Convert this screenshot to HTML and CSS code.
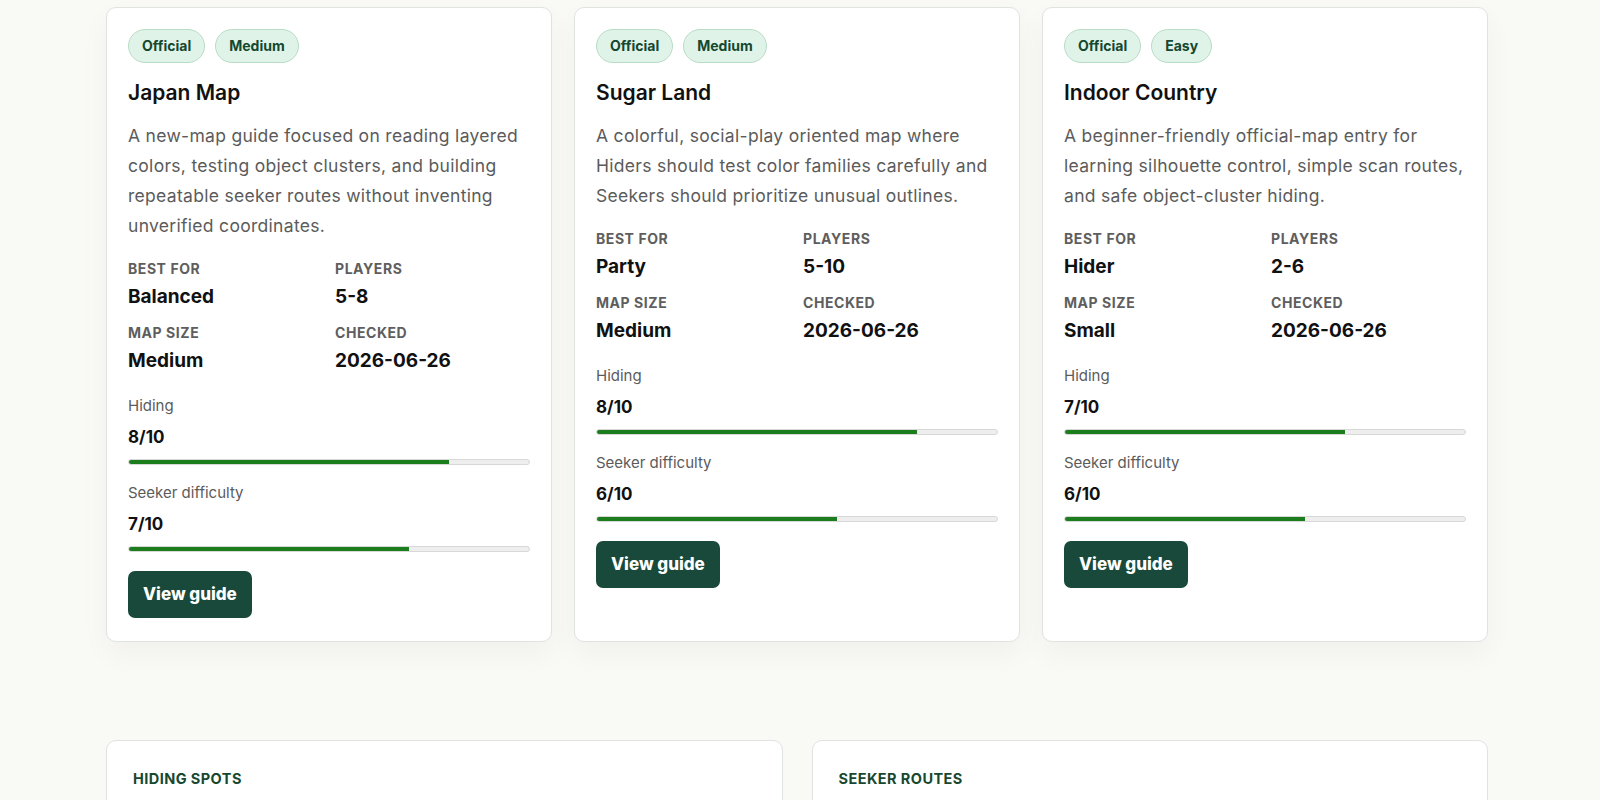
FILE: index.html
```html
<!DOCTYPE html>

<html>
    <head>
        <meta charset=UTF-8>
        <title>Hide and Seek map guides</title>

        <link rel="stylesheet" href="styles.css">
    </head>

    <body>
        <div id="page">
            <div class="cards">
                <div class="card">
                    <div class="tags">
                        <span class="tag">Official</span>
                        <span class="tag">Medium</span>
                    </div>
                    <h3>Japan Map</h3>
                    <p class="desc">A new-map guide focused on reading layered colors, testing object clusters, and building repeatable seeker routes without inventing unverified coordinates.</p>
                    <dl class="facts">
                        <div><dt>Best for</dt><dd>Balanced</dd></div>
                        <div><dt>Players</dt><dd>5-8</dd></div>
                        <div><dt>Map size</dt><dd>Medium</dd></div>
                        <div><dt>Checked</dt><dd>2026-06-26</dd></div>
                    </dl>
                    <div class="meter">
                        <span class="meter-label">Hiding</span>
                        <strong>8/10</strong>
                        <div class="bar"><div class="fill" style="width: 80%"></div></div>
                    </div>
                    <div class="meter">
                        <span class="meter-label">Seeker difficulty</span>
                        <strong>7/10</strong>
                        <div class="bar"><div class="fill" style="width: 70%"></div></div>
                    </div>
                    <a class="btn" href="#">View guide</a>
                </div>

                <div class="card">
                    <div class="tags">
                        <span class="tag">Official</span>
                        <span class="tag">Medium</span>
                    </div>
                    <h3>Sugar Land</h3>
                    <p class="desc">A colorful, social-play oriented map where Hiders should test color families carefully and Seekers should prioritize unusual outlines.</p>
                    <dl class="facts">
                        <div><dt>Best for</dt><dd>Party</dd></div>
                        <div><dt>Players</dt><dd>5-10</dd></div>
                        <div><dt>Map size</dt><dd>Medium</dd></div>
                        <div><dt>Checked</dt><dd>2026-06-26</dd></div>
                    </dl>
                    <div class="meter">
                        <span class="meter-label">Hiding</span>
                        <strong>8/10</strong>
                        <div class="bar"><div class="fill" style="width: 80%"></div></div>
                    </div>
                    <div class="meter">
                        <span class="meter-label">Seeker difficulty</span>
                        <strong>6/10</strong>
                        <div class="bar"><div class="fill" style="width: 60%"></div></div>
                    </div>
                    <a class="btn" href="#">View guide</a>
                </div>

                <div class="card">
                    <div class="tags">
                        <span class="tag">Official</span>
                        <span class="tag">Easy</span>
                    </div>
                    <h3>Indoor Country</h3>
                    <p class="desc">A beginner-friendly official-map entry for learning silhouette control, simple scan routes, and safe object-cluster hiding.</p>
                    <dl class="facts">
                        <div><dt>Best for</dt><dd>Hider</dd></div>
                        <div><dt>Players</dt><dd>2-6</dd></div>
                        <div><dt>Map size</dt><dd>Small</dd></div>
                        <div><dt>Checked</dt><dd>2026-06-26</dd></div>
                    </dl>
                    <div class="meter">
                        <span class="meter-label">Hiding</span>
                        <strong>7/10</strong>
                        <div class="bar"><div class="fill" style="width: 70%"></div></div>
                    </div>
                    <div class="meter">
                        <span class="meter-label">Seeker difficulty</span>
                        <strong>6/10</strong>
                        <div class="bar"><div class="fill" style="width: 60%"></div></div>
                    </div>
                    <a class="btn" href="#">View guide</a>
                </div>
            </div>

            <div class="panels">
                <section class="panel">
                    <h2>Hiding spots</h2>
                </section>
                <section class="panel">
                    <h2>Seeker routes</h2>
                </section>
            </div>
        </div>
    </body>
</html>
```

FILE: styles.css
```css
* {
    box-sizing: border-box;
    font-family: "Inter", "Liberation Sans", Arial, sans-serif;
}

body {
    margin: 0;
    background-color: #f9f9f6;
    color: #111;
}

#page {
    width: 1382px;
    margin: 0 0 0 106px;
    padding-top: 7px;
}

.cards {
    display: grid;
    grid-template-columns: 1fr 1fr 1fr;
    gap: 22px;
}

.card {
    background-color: #fff;
    border: 1px solid #dfe4e0;
    border-radius: 10px;
    padding: 21px 21px 23px;
    box-shadow: 0 12px 30px rgba(30, 40, 30, 0.04);
}

.tags {
    display: flex;
    gap: 10px;
}

.tag {
    font-size: 14px;
    font-weight: 700;
    line-height: 18px;
    padding: 7px 13px;
    color: #14482f;
    background-color: #e0f3e8;
    border: 1px solid #b9dcc7;
    border-radius: 17px;
}

h3 {
    margin: 16px 0 15px;
    font-size: 21px;
    font-weight: 600;
    line-height: 1.3;
}

.desc {
    margin: 0;
    font-size: 17.5px;
    letter-spacing: 0.3px;
    line-height: 30px;
    color: #5b5b5b;
}

.facts {
    display: grid;
    grid-template-columns: 1fr 1fr;
    column-gap: 12px;
    row-gap: 15px;
    margin: 19px 0 0;
}

dt {
    font-size: 14px;
    font-weight: 700;
    line-height: 18px;
    letter-spacing: 0.04em;
    text-transform: uppercase;
    color: #5e5e5e;
}

dd {
    margin: 6px 0 0;
    font-size: 19px;
    font-weight: 700;
    line-height: 25px;
}

.meter {
    margin-top: 22px;
}

.meter + .meter {
    margin-top: 17px;
}

.meter-label {
    display: block;
    font-size: 15px;
    line-height: 21px;
    color: #5b5b5b;
}

.meter strong {
    display: block;
    margin-top: 9px;
    font-size: 17px;
    line-height: 24px;
}

.bar {
    margin-top: 10px;
    height: 6px;
    background-color: #eee;
    border: 1px solid #d8d8d8;
    border-radius: 3px;
    overflow: hidden;
}

.fill {
    height: 100%;
    background-color: #1c7d1c;
}

.btn {
    display: inline-block;
    margin-top: 19px;
    padding: 0 15px;
    height: 47px;
    line-height: 47px;
    font-size: 17px;
    font-weight: 800;
    color: #fff;
    text-decoration: none;
    background-color: #18493a;
    border-radius: 7px;
}

.panels {
    display: grid;
    grid-template-columns: 1fr 1fr;
    gap: 29px;
    margin-top: 98px;
}

.panel {
    background-color: #fff;
    border: 1px solid #dfe4e0;
    border-radius: 10px;
    padding: 29px 26px;
    min-height: 120px;
}

.panel h2 {
    margin: 0;
    font-size: 14.5px;
    font-weight: 700;
    letter-spacing: 0.03em;
    text-transform: uppercase;
    color: #17482f;
}
```
